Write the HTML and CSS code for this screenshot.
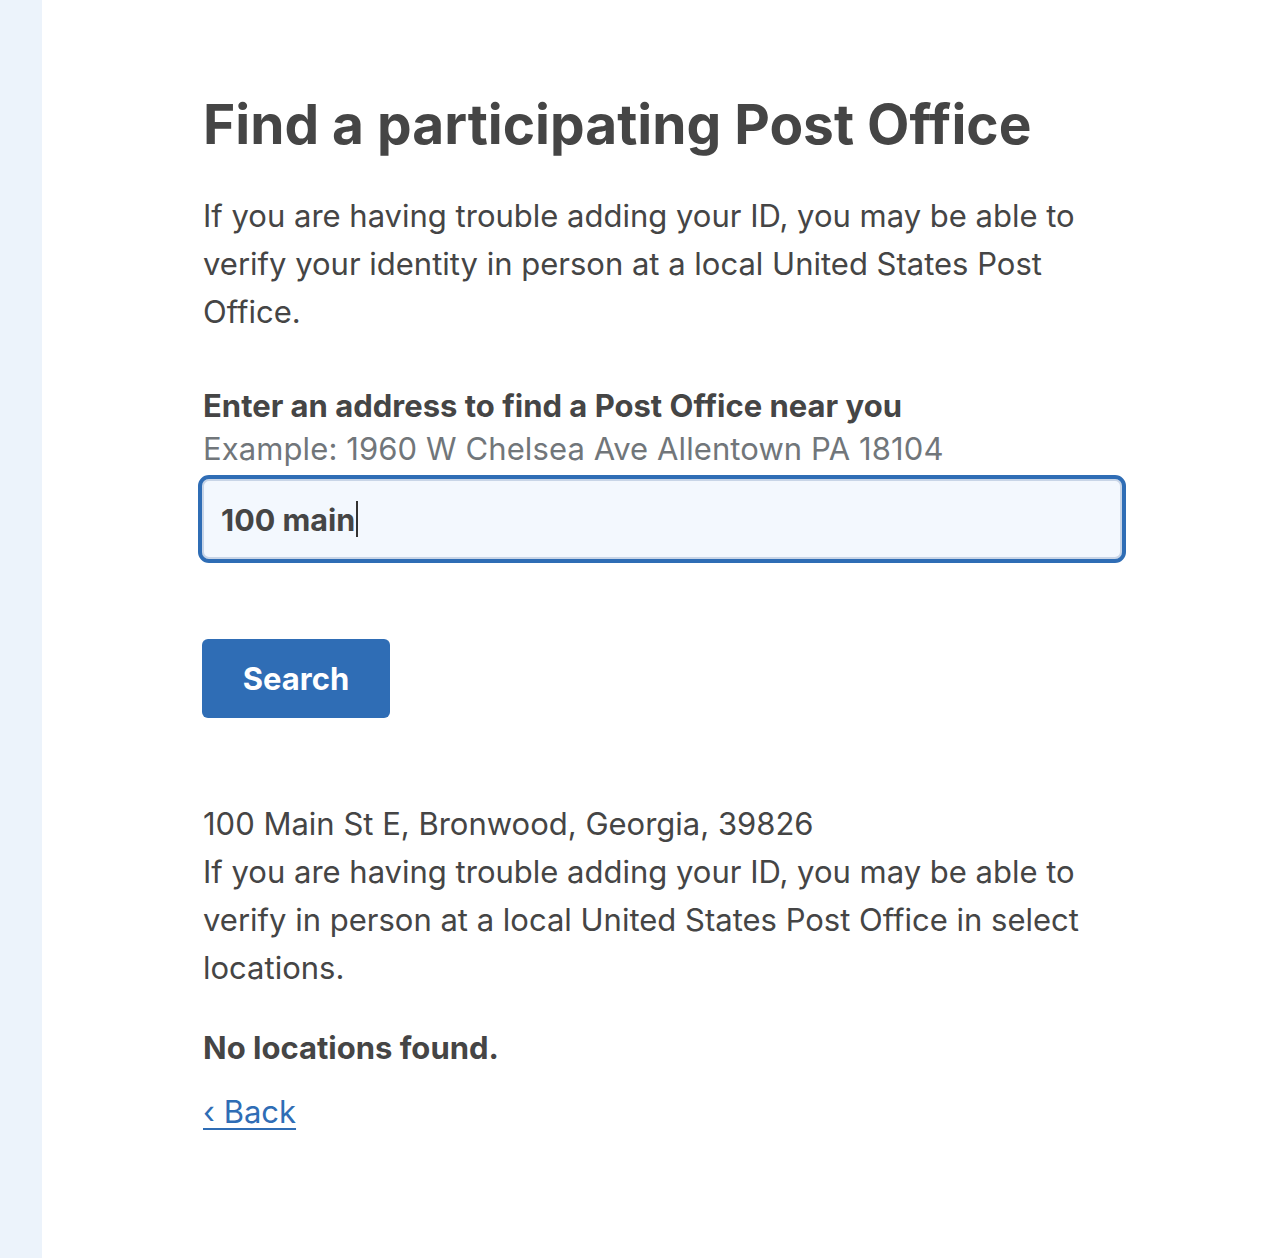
FILE: index.html
```html
<!DOCTYPE html>
<html lang="en">
<head>
<meta charset="utf-8">
<title>Find a participating Post Office</title>
<link rel="stylesheet" href="styles.css">
</head>
<body>
<div class="page">
  <aside class="side"></aside>
  <main class="main">
    <h1 class="title">Find a participating Post Office</h1>
    <p class="intro">If you are having trouble adding your ID, you may be able to verify your identity in person at a local United States Post Office.</p>
    <label class="label" for="addr">Enter an address to find a Post Office near you</label>
    <div class="hint">Example: 1960 W Chelsea Ave Allentown PA 18104</div>
    <div class="field"><span class="value">100 main</span><span class="caret"></span></div>
    <button class="btn" type="button">Search</button>
    <div class="results">
      <p class="addr">100 Main St E, Bronwood, Georgia, 39826<br>If you are having trouble adding your ID, you may be able to verify in person at a local United States Post Office in select locations.</p>
      <p class="none">No locations found.</p>
      <p class="backline"><a class="back" href="#">‹ Back</a></p>
    </div>
  </main>
</div>
</body>
</html>
```
FILE: styles.css
```css
html, body { margin: 0; padding: 0; background: #fff; }
body { font-family: "Inter", "Liberation Sans", sans-serif; color: #454545; }
.page { display: flex; min-height: 1258px; }
.side { width: 42px; background: #ecf3fb; flex: none; }
.main { flex: 1; padding: 89px 0 0 161px; box-sizing: border-box; }
.title { font-size: 55px; font-weight: 700; margin: 0 0 33px; line-height: 70px; }
.intro { font-size: 31px; line-height: 48px; margin: 0 0 49px; width: 920px; }
.label { display: block; font-size: 31px; font-weight: 700; line-height: 42px; }
.hint { font-size: 31px; color: #71767a; line-height: 44px; letter-spacing: 0.1px; }
.field { box-sizing: border-box; width: 920px; height: 80px; margin-top: 8px; margin-left: -1px; border: 2px solid #c8d5e7; border-radius: 7px; background: #f3f8fe; outline: 4px solid #2f6db5; display: flex; align-items: center; padding-left: 17px; }
.value { font-size: 30.5px; font-weight: 700; }
.caret { width: 2px; height: 36px; background: #333; margin-left: 1px; }
.btn { display: block; margin: 80px 0 0 -1px; width: 188px; height: 79px; border: 0; border-radius: 6px; background: #2f6db5; color: #fff; font-family: inherit; font-size: 31px; font-weight: 700; padding: 0; }
.results { margin-top: 82px; }
.addr { font-size: 31px; line-height: 48px; margin: 0 0 32px; width: 920px; }
.none { font-size: 31px; font-weight: 700; line-height: 48px; margin: 0 0 16px; }
.backline { margin: 0; font-size: 31px; line-height: 48px; }
.back { color: #2f6db5; text-decoration: underline; text-decoration-thickness: 2px; text-underline-offset: 5px; }
```
